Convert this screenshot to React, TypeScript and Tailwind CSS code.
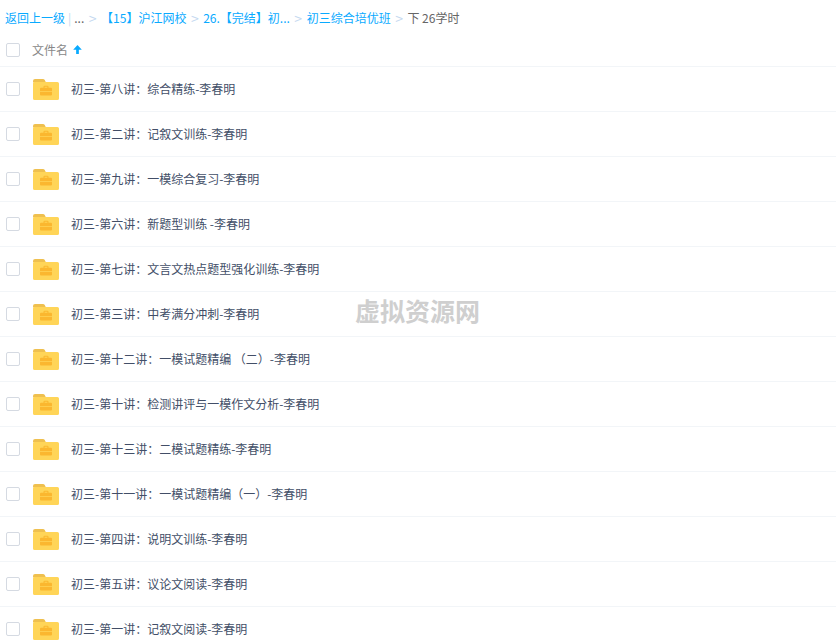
import React from "react";

const files = [
  "初三-第八讲：综合精练-李春明",
  "初三-第二讲：记叙文训练-李春明",
  "初三-第九讲：一模综合复习-李春明",
  "初三-第六讲：新题型训练 -李春明",
  "初三-第七讲：文言文热点题型强化训练-李春明",
  "初三-第三讲：中考满分冲刺-李春明",
  "初三-第十二讲：一模试题精编 （二）-李春明",
  "初三-第十讲：检测讲评与一模作文分析-李春明",
  "初三-第十三讲：二模试题精练-李春明",
  "初三-第十一讲：一模试题精编（一）-李春明",
  "初三-第四讲：说明文训练-李春明",
  "初三-第五讲：议论文阅读-李春明",
  "初三-第一讲：记叙文阅读-李春明",
];

const FolderIcon = () => (
  <svg width="26" height="21" viewBox="0 0 26 21" className="block">
    <path d="M0 2a2 2 0 0 1 2-2h8a2 2 0 0 1 1.6.8L13 3.5H0z" fill="#efc04f" />
    <path d="M0 4.6A1.6 1.6 0 0 1 1.6 3h22.8A1.6 1.6 0 0 1 26 4.6v14.8a1.6 1.6 0 0 1-1.6 1.6H1.6A1.6 1.6 0 0 1 0 19.4z" fill="#ffd558" />
    <path d="M10.5 9V7.7a1 1 0 0 1 1-1h3a1 1 0 0 1 1 1V9h-1.1V7.8h-2.8V9z" fill="#fbb72f" />
    <path d="M7 9.8a1 1 0 0 1 1-1h10a1 1 0 0 1 1 1v2.2H7z" fill="#fbb72f" />
    <path d="M7 12.7h12v2.8a1 1 0 0 1-1 1H8a1 1 0 0 1-1-1z" fill="#fbb72f" />
  </svg>
);

const Checkbox = () => (
  <span className="block w-[14px] h-[14px] shrink-0 rounded-[2px] border border-[#d5dae2] bg-white" />
);

const Sep = () => <span className="text-[14px] leading-none text-[#c4d8f0] mx-[4.5px]">&gt;</span>;

function App() {
  return (
    <div
      className="relative w-[836px] h-[643px] overflow-hidden bg-white text-[12px]"
      style={{ fontFamily: '"Noto Sans CJK SC", "Liberation Sans", sans-serif' }}
    >
      <div className="h-[34px] pt-px pl-[5px] flex items-center whitespace-nowrap text-[#09aaff]">
        <span>返回上一级</span>
        <span className="text-[#c4d8f0] mx-[3px]">|</span>
        <span className="text-[#666]">...</span>
        <Sep />
        <span>【15】沪江网校</span>
        <Sep />
        <span>26.【完结】初...</span>
        <Sep />
        <span>初三综合培优班</span>
        <Sep />
        <span className="text-[#666]">下 26学时</span>
      </div>

      <div className="h-[33px] pl-[6px] flex items-center border-b border-[#f2f5f8]">
        <Checkbox />
        <span className="ml-3 text-[#888]">文件名</span>
        <svg width="9" height="9" viewBox="0 0 10 10" className="ml-[5px] mb-[2px]">
          <path d="M5 0 9.8 5.4H6.5V10H3.5V5.4H.2z" fill="#09aaff" />
        </svg>
      </div>

      {files.map((name) => (
        <div key={name} className="h-[45px] pl-[6px] flex items-center border-b border-[#f2f5f8]">
          <Checkbox />
          <span className="ml-[13px] mt-px">
            <FolderIcon />
          </span>
          <span className="ml-3 text-[#424e67] whitespace-pre">{name}</span>
        </div>
      ))}

      <div className="absolute left-[355px] top-[292px] text-[25px] leading-[36px] font-bold text-[#cfcfcf]">
        虚拟资源网
      </div>
    </div>
  );
}

export default App;
